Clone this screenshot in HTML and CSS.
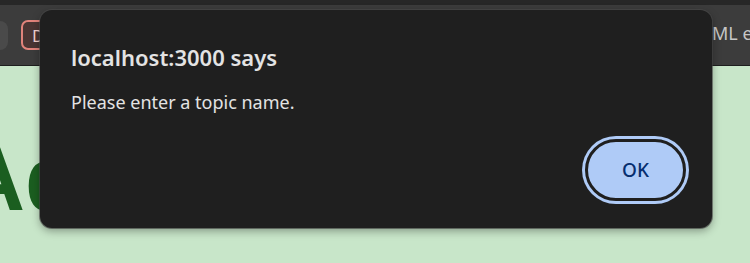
FILE: index.html
```html
<!DOCTYPE html>
<html lang="en">
<head>
    <meta charset="UTF-8">
    <meta name="viewport" content="width=device-width, initial-scale=1.0">
    <title>Add Notes</title>
    <link rel="stylesheet" href="styles.css">
</head>
<body>
    <div class="toolbar">
        <div class="search-box"></div>
        <button class="tab-btn">D</button>
        <span class="toolbar-text">ML e</span>
    </div>

    <div class="page">
        <h1 class="page-title">Add Notes</h1>
    </div>

    <!-- Browser alert dialog -->
    <div class="alert-dialog">
        <h2 class="alert-title">localhost:3000 says</h2>
        <p class="alert-message">Please enter a topic name.</p>
        <div class="alert-actions">
            <button class="ok-btn">OK</button>
        </div>
    </div>
</body>
</html>
```

FILE: styles.css
```css
body {
    margin: 0;
    background-color: #c8e6c9;
    font-family: 'Noto Sans', 'Open Sans', sans-serif;
    overflow: hidden;
    height: 263px;
}

.toolbar {
    height: 60px;
    background-color: #3c3c3c;
    border-top: 5px solid #272727;
    border-bottom: 1px solid #1e1e1e;
    display: flex;
    align-items: center;
    box-sizing: content-box;
}

.search-box {
    width: 8px;
    height: 29px;
    background-color: #4a4a4a;
    border-radius: 0 8px 8px 0;
    margin-right: 13px;
}

.tab-btn {
    height: 30px;
    width: 44px;
    border: 2px solid #e2837b;
    border-radius: 7px;
    background-color: #4a3533;
    color: #f4d3d0;
    font-family: inherit;
    font-size: 17px;
    text-align: left;
    padding: 0 0 0 9px;
}

.toolbar-text {
    margin-left: auto;
    margin-right: -20px;
    width: 58px;
    color: #c6c6c6;
    font-size: 18px;
    padding-bottom: 4px;
}

.page {
    padding-top: 68px;
}

.page-title {
    margin: 0 0 0 -40px;
    font-family: 'Liberation Sans', Arial, sans-serif;
    font-size: 90px;
    line-height: 90px;
    font-weight: bold;
    color: #1b5e20;
    white-space: nowrap;
}

.alert-dialog {
    position: absolute;
    left: 40px;
    top: 10px;
    width: 672px;
    height: 218px;
    box-sizing: border-box;
    padding: 34px 23px 24px 31px;
    background-color: #1f1f1f;
    border-radius: 12px;
    box-shadow: 0 3px 8px rgba(0, 0, 0, 0.35), 0 0 0 1px rgba(80, 80, 80, 0.6);
    display: flex;
    flex-direction: column;
    color: #e3e3e3;
}

.alert-title {
    margin: 0;
    font-size: 22px;
    font-weight: 600;
    line-height: 26px;
}

.alert-message {
    margin: 21px 0 0;
    font-size: 18px;
    line-height: 22px;
}

.alert-actions {
    margin-top: auto;
    display: flex;
    justify-content: flex-end;
}

.ok-btn {
    width: 101px;
    height: 62px;
    margin: 3px;
    border: 3px solid #1f1f1f;
    border-radius: 32px;
    background-color: #afcbf7;
    box-shadow: 0 0 0 3px #afcbf7;
    color: #062e6f;
    font-family: inherit;
    font-size: 19px;
    font-weight: 500;
}
```
